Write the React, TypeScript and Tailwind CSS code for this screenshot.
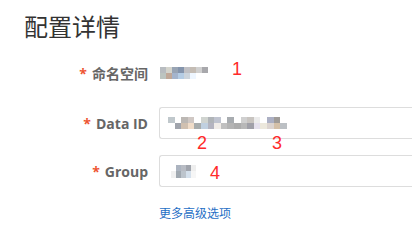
import React from "react";

// blurred (mosaic) values from the screenshot, drawn as colour blocks
type Mosaic = string[][];

const nsBlur: Mosaic = [
  ["#b8bcc0", "#d4d4cc", "#98a4b4", "#8494ac", "#c0c0c4", "#c4bcb4", "#d0d0d0", "#a8a8ac"],
  ["#bcc4c0", "#c0a898", "#a4b4cc", "#b4cce4", "#ccd4dc", "#eef6ff", "#ffffff", "#ffffff"],
];

const idBlur: Mosaic = [
  ["#c0c8cc", "#ffffff", "#bcb8b4", "#d0c8c4", "#ffffff", "#d0d4d0", "#b0b4b8", "#c0c4d0", "#ffffff", "#a8acb0", "#ffffff", "#d0d0d0", "#c8c4c0", "#ececec", "#ffffff", "#acb0c4", "#a09c98", "#ffffff"],
  ["#ffffff", "#a0a4ac", "#d0c0b0", "#f0dcc8", "#a8acac", "#c0d0e0", "#b4b4c0", "#f0ece8", "#c0c0c0", "#b4b4b4", "#acacac", "#b8b8b8", "#a0a0a8", "#e4e0ec", "#ece8dc", "#dcd4d0", "#d4c0a8", "#bcc0c4"],
];

const grpBlur: Mosaic = [
  ["#ffffff", "#acb4c0", "#b8bcc4", "#a0a4ac", "#eeeeee"],
  ["#f0f0f0", "#a0a8b0", "#bcc4cc", "#d4e0ec", "#f6f6f6"],
];

function Blur({ data, w, h }: { data: Mosaic; w: number; h: number }) {
  return (
    <div className="flex flex-col">
      {data.map((row, i) => (
        <div key={i} className="flex">
          {row.map((c, j) => (
            <div key={j} style={{ width: w, height: h, background: c }} />
          ))}
        </div>
      ))}
    </div>
  );
}

function Label({ text }: { text: string }) {
  return (
    <div
      className="w-[148px] shrink-0 text-right text-[14px] font-bold text-[#666666]"
      style={{ fontFamily: '"Open Sans", "Noto Sans CJK SC", sans-serif' }}
    >
      <span className="mr-[5px] text-[#ee5533]">*</span>
      {text}
    </div>
  );
}

function Mark({ n, className }: { n: string; className: string }) {
  return (
    <span className={`absolute text-[18px] leading-none text-[#ff2a2a] ${className}`}>{n}</span>
  );
}

export default function App() {
  return (
    <div
      className="w-[412px] h-[240px] overflow-hidden bg-white"
      style={{ fontFamily: '"Liberation Sans", "Noto Sans CJK SC", sans-serif' }}
    >
      <h1 className="pl-[24px] pt-[15px] text-[24px] leading-[26px] text-[#333333]">配置详情</h1>

      <div className="mt-[25px] flex items-center h-[14px]">
        <Label text="命名空间" />
        <div className="relative ml-[12px] flex items-center h-full">
          <Blur data={nsBlur} w={6} h={6} />
          <Mark n="1" className="left-[72px] top-[-6px]" />
        </div>
      </div>

      <div className="mt-[27px] flex items-center">
        <Label text="Data ID" />
        <div className="relative ml-[11px] flex-1 h-[32px] rounded-l-[3px] border border-r-0 border-[#dddddd] flex items-center pl-[8px]">
          <Blur data={idBlur} w={6.6} h={6} />
          <Mark n="2" className="left-[37px] top-[26px]" />
          <Mark n="3" className="left-[112px] top-[26px]" />
        </div>
      </div>

      <div className="mt-[16px] flex items-center">
        <Label text="Group" />
        <div className="relative ml-[11px] flex-1 h-[32px] rounded-l-[3px] border border-r-0 border-[#dddddd] flex items-center pl-[11px]">
          <Blur data={grpBlur} w={5} h={6.5} />
          <Mark n="4" className="left-[50px] top-[8px]" />
        </div>
      </div>

      <div className="mt-[14px] pl-[159px]">
        <a className="text-[12px] text-[#1f6fc5] cursor-pointer">更多高级选项</a>
      </div>
    </div>
  );
}
